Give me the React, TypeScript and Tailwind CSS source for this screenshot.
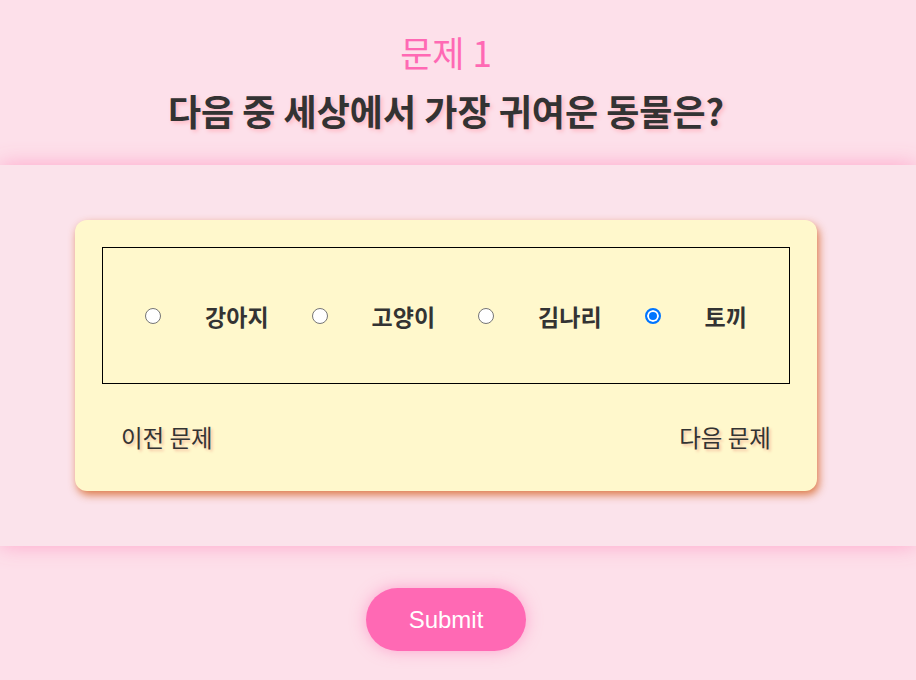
import React from "react";

const kr = { fontFamily: '"Noto Sans CJK KR", "Noto Sans", sans-serif' };

export default function App() {
  const options = ["강아지", "고양이", "김나리", "토끼"];
  return (
    <div className="min-h-[680px] w-full bg-[#fde0ea] flex flex-col" style={kr}>
      <header className="w-[892px] flex flex-col items-center pt-[32px] pb-[35px] gap-[18px]">
        <h1 className="text-[35px] leading-[40px] text-[#ff69b4] font-normal">문제 1</h1>
        <h2 className="text-[36px] leading-[40px] font-bold text-[#333333] [text-shadow:2px_2px_4px_#ffb6c1]">
          다음 중 세상에서 가장 귀여운 동물은?
        </h2>
      </header>
      <main className="relative z-10 bg-[#fbe3eb] shadow-[0_0_20px_rgba(255,160,200,0.9)] py-[55px]">
        <div className="ml-[75px] w-[742px] bg-[#fff8cc] rounded-[12px] shadow-[2px_4px_9px_rgba(215,105,45,0.85)] px-[27px] pt-[27px]">
          <div className="h-[137px] border border-black flex items-center justify-center">
            {options.map((o, i) => (
              <label key={o} className={"flex items-center " + (i > 0 ? "ml-[43px]" : "")}>
                <input
                  type="radio"
                  name="animal"
                  defaultChecked={o === "토끼"}
                  className="m-0 w-4 h-4 appearance-none rounded-full border border-[#767676] bg-white checked:border-2 checked:border-[#0075ff] checked:bg-[#0075ff] checked:shadow-[inset_0_0_0_2px_white]"
                />
                <span className="ml-[44px] text-[23px] font-bold text-[#333333] leading-[28px]">{o}</span>
              </label>
            ))}
          </div>
          <div className="h-[107px] pt-[38px] flex justify-between px-[19px]">
            <span className="text-[23.5px] leading-[30px] text-[#333333] [text-shadow:2px_2px_3px_#f5c0a0]">이전 문제</span>
            <span className="text-[23.5px] leading-[30px] text-[#333333] [text-shadow:2px_2px_3px_#f5c0a0]">다음 문제</span>
          </div>
        </div>
      </main>
      <footer className="w-[892px] flex justify-center pt-[42px] pb-[29px]">
        <button
          className="w-[160px] h-[63px] rounded-full bg-[#ff69b4] text-white text-[24px] shadow-[0_0_15px_rgba(255,105,180,0.5)]"
          style={{ fontFamily: '"Liberation Sans", Arial, sans-serif' }}
        >
          Submit
        </button>
      </footer>
    </div>
  );
}
